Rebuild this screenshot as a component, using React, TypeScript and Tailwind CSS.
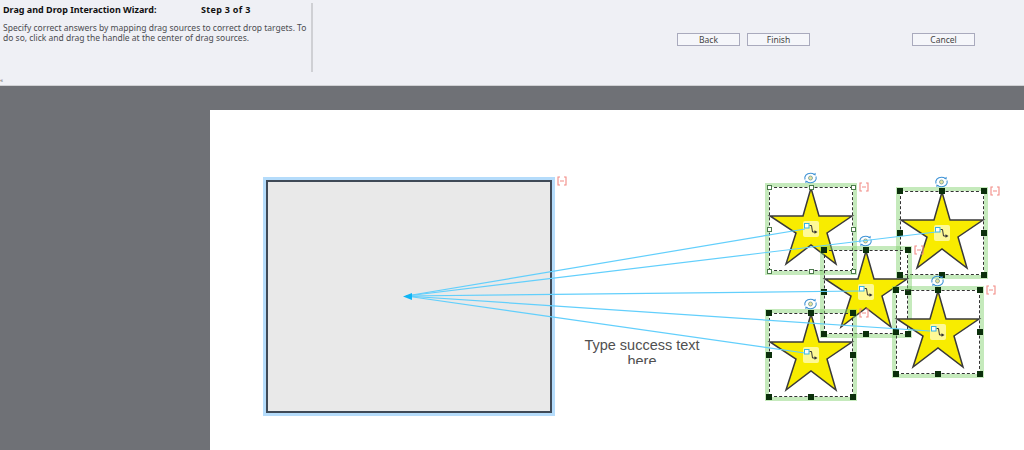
import React from 'react';

type Node = {
  x: number; // left of dashed box in page coords
  y: number;
  white?: boolean;
};

const CANVAS_X = 210;
const CANVAS_Y = 110;

const nodes: Node[] = [
  { x: 769, y: 187, white: true },
  { x: 900, y: 191 },
  { x: 824, y: 250 },
  { x: 769, y: 313 },
  { x: 896, y: 290 },
];

const lines = [
  [805, 229],
  [936, 232],
  [860, 291],
  [930, 331],
  [805, 353],
];

function MinusBadge({ className }: { className: string }) {
  return (
    <svg className={`absolute ${className}`} width="10" height="10" viewBox="0 0 10 10" fill="none" stroke="#f28b85" strokeWidth="1.1">
      <path d="M3 1H1V9H3M7 1H9V9H7M3 5H7" />
    </svg>
  );
}

function RotateIcon() {
  return (
    <svg className="absolute left-[34px] top-[-15px]" width="15" height="12" viewBox="0 0 15 12" fill="none">
      <circle cx="7.5" cy="6" r="2" fill="#e8e4a0" stroke="#6f9a9a" strokeWidth="0.8" />
      <path d="M2 7.5C1 4 3.5 1.2 7.5 1.2C9 1.2 10.3 1.6 11.3 2.4" stroke="#3f93d6" strokeWidth="1.1" />
      <path d="M13 4.5C14 8 11.5 10.8 7.5 10.8C6 10.8 4.7 10.4 3.7 9.6" stroke="#3f93d6" strokeWidth="1.1" />
      <path d="M12.6 0.8L12.6 3.6L10 2.8Z" fill="#3f93d6" />
      <path d="M2.4 11.2L2.4 8.4L5 9.2Z" fill="#3f93d6" />
    </svg>
  );
}

function StarNode({ node }: { node: Node }) {
  const handles = [
    [0, 0], [42, 0], [84, 0],
    [0, 42], [84, 42],
    [0, 84], [42, 84], [84, 84],
  ];
  return (
    <div
      className="absolute w-[84px] h-[84px]"
      style={{ left: node.x - CANVAS_X, top: node.y - CANVAS_Y }}
    >
      <div className="absolute inset-[-4px] border-4 border-[#7fd06a]/45" />
      <svg className="absolute left-0 top-0 overflow-visible" width="84" height="84" viewBox="0 0 84 84">
        <path
          d="M42 1L50 29L83 29L58 46L67 77L42 58L17 77L27 46L1 29L34 29Z"
          fill="#f8ec00"
          stroke="#3a3a3a"
          strokeWidth="1.5"
          strokeLinejoin="miter"
        />
      </svg>
      <div className="absolute inset-0 border border-dashed border-[#333333]" />
      <RotateIcon />
      <MinusBadge className="left-[90px] top-[-5px]" />
      {handles.map(([hx, hy]) => (
        <div
          key={`${hx}-${hy}`}
          className={`absolute border ${node.white ? 'w-[5px] h-[5px] bg-white border-[#4d7a4d]' : 'w-[6px] h-[6px] bg-[#0b2f0b] border-[#0b2f0b]'}`}
          style={{ left: hx - (node.white ? 2 : 3), top: hy - (node.white ? 2 : 3) }}
        />
      ))}
      <div className="absolute left-[34px] top-[34px] w-[16px] h-[16px] rounded-[2px] bg-[#fffbb0]/85" />
      <svg className="absolute left-[34px] top-[34px]" width="16" height="16" viewBox="0 0 16 16" fill="none">
        <path d="M6.5 4.5H8.5L9.5 11H12" stroke="#333333" strokeWidth="1" />
        <path d="M11.5 9.2L14.5 11L11.5 12.8Z" fill="#333333" />
        <rect x="1.5" y="2.5" width="4.5" height="4.5" fill="#ffffff" stroke="#35b5e8" strokeWidth="1" />
      </svg>
    </div>
  );
}

export default function App() {
  return (
    <div className="w-[1024px] h-[450px] overflow-hidden flex flex-col bg-[#6f7176] font-['Noto_Sans',sans-serif]">
      {/* WIZARD HEADER */}
      <header className="relative h-[86px] shrink-0 bg-[#eff0f5] border-b border-[#d0d1d4] flex">
        <div className="w-[313px] h-[69px] mt-[3px] pl-[3px] border-r-2 border-[#cfd0d4] shrink-0">
          <div className="flex text-[9px] leading-[14px] font-bold text-[#111111]">
            <span className="w-[198px]">Drag and Drop Interaction Wizard:</span>
            <span className="tracking-[0.3px]">Step 3 of 3</span>
          </div>
          <p className="mt-[6px] text-[8.5px] leading-[10px] text-[#4b4c50]">
            Specify correct answers by mapping drag sources to correct drop targets. To do so, click and drag the handle at the center of drag sources.
          </p>
        </div>
        <div className="flex-1 flex items-start gap-[7px] pt-[33px] pl-[364px] text-[8.5px] text-[#444444]">
          <button className="w-[63px] h-[13px] leading-[11px] bg-[#f5f6fa] border border-[#a9aabd]">Back</button>
          <button className="w-[63px] h-[13px] leading-[11px] bg-[#f5f6fa] border border-[#a9aabd]">Finish</button>
          <button className="ml-[95px] w-[63px] h-[13px] leading-[11px] bg-[#f5f6fa] border border-[#a9aabd]">Cancel</button>
        </div>
        <span className="absolute left-0 top-[77px] text-[6px] leading-[6px] text-[#555555]">«</span>
      </header>

      {/* TOOLBAR STRIP */}
      <div className="h-[24px] shrink-0" />

      <div className="flex-1 flex min-h-0">
        <aside className="w-[210px] shrink-0" />

        {/* SLIDE CANVAS */}
        <main className="relative flex-1 bg-white overflow-hidden">
          <div className="absolute left-[53px] top-[67px] w-[292px] h-[239px] border-[3px] border-[#b5dcfb]">
            <div className="w-full h-full bg-[#e9e9e9] border-2 border-[#3f4a57]" />
          </div>
          <MinusBadge className="left-[347px] top-[66px]" />

          {/* clipped on purpose, the text box is too short for its second line */}
          <div className="absolute left-[365px] top-[227px] w-[134px] h-[27px] overflow-hidden text-center text-[14.5px] leading-[16px] text-[#505050] font-['Liberation_Sans',sans-serif]">
            Type success text here
          </div>

          {nodes.map((n) => (
            <StarNode key={`${n.x}-${n.y}`} node={n} />
          ))}

          {/* CONNECTORS */}
          <svg className="absolute left-0 top-0 pointer-events-none" width="814" height="340" viewBox="210 110 814 340" fill="none">
            {lines.map(([lx, ly]) => (
              <line key={lx + ly} x1="406" y1="296" x2={lx} y2={ly} stroke="#62cffc" strokeWidth="1.2" />
            ))}
            <path d="M403 296.5L412 293V300Z" fill="#10b5f5" />
          </svg>
        </main>
      </div>
    </div>
  );
}
